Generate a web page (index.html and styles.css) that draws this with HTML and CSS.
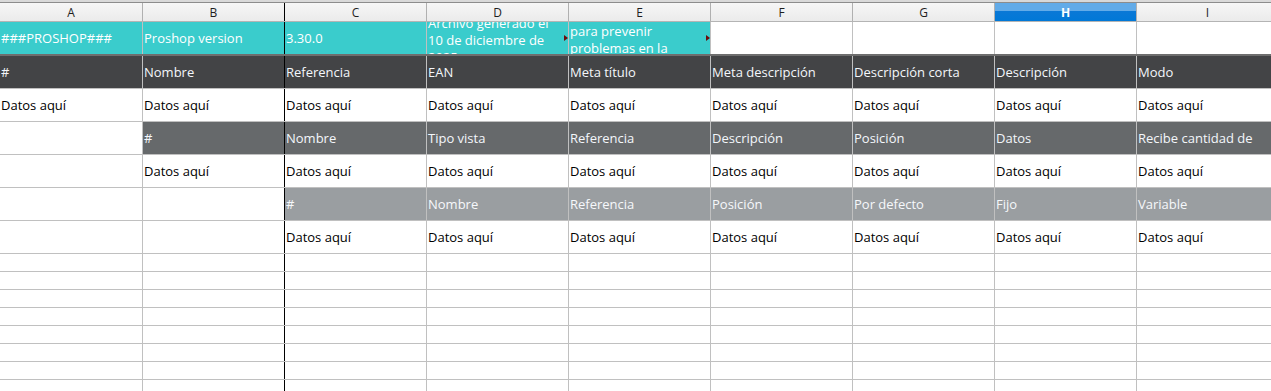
FILE: index.html
```html
<!DOCTYPE html>
<html lang="es">
<head>
  <meta charset="UTF-8" />
  <meta name="viewport" content="width=device-width, initial-scale=1.0"/>
  <title>Plantilla de importación</title>
  <link rel="stylesheet" href="styles.css">
</head>
<body>

  <div class="sheet">
    <div class="top-strip"></div>

    <div class="row col-heads">
      <div class="cell">A</div>
      <div class="cell">B</div>
      <div class="cell">C</div>
      <div class="cell">D</div>
      <div class="cell">E</div>
      <div class="cell">F</div>
      <div class="cell">G</div>
      <div class="cell active">H</div>
      <div class="cell">I</div>
    </div>

    <div class="row info">
      <div class="cell cyan">###PROSHOP###</div>
      <div class="cell cyan">Proshop version</div>
      <div class="cell cyan">3.30.0</div>
      <div class="cell cyan clipped">
        <div class="wrap">Archivo generado el<br>10 de diciembre de<br>2025</div>
        <span class="more"></span>
      </div>
      <div class="cell cyan clipped">
        <div class="wrap">No modifique esta fila<br>para prevenir<br>problemas en la<br>importación</div>
        <span class="more"></span>
      </div>
      <div class="cell"></div>
      <div class="cell"></div>
      <div class="cell"></div>
      <div class="cell"></div>
    </div>

    <div class="row">
      <div class="cell dark">#</div>
      <div class="cell dark">Nombre</div>
      <div class="cell dark">Referencia</div>
      <div class="cell dark">EAN</div>
      <div class="cell dark">Meta título</div>
      <div class="cell dark">Meta descripción</div>
      <div class="cell dark">Descripción corta</div>
      <div class="cell dark">Descripción</div>
      <div class="cell dark">Modo</div>
    </div>

    <div class="row">
      <div class="cell">Datos aquí</div>
      <div class="cell">Datos aquí</div>
      <div class="cell">Datos aquí</div>
      <div class="cell">Datos aquí</div>
      <div class="cell">Datos aquí</div>
      <div class="cell">Datos aquí</div>
      <div class="cell">Datos aquí</div>
      <div class="cell">Datos aquí</div>
      <div class="cell">Datos aquí</div>
    </div>

    <div class="row">
      <div class="cell"></div>
      <div class="cell mid">#</div>
      <div class="cell mid">Nombre</div>
      <div class="cell mid">Tipo vista</div>
      <div class="cell mid">Referencia</div>
      <div class="cell mid">Descripción</div>
      <div class="cell mid">Posición</div>
      <div class="cell mid">Datos</div>
      <div class="cell mid">Recibe cantidad de</div>
    </div>

    <div class="row">
      <div class="cell"></div>
      <div class="cell">Datos aquí</div>
      <div class="cell">Datos aquí</div>
      <div class="cell">Datos aquí</div>
      <div class="cell">Datos aquí</div>
      <div class="cell">Datos aquí</div>
      <div class="cell">Datos aquí</div>
      <div class="cell">Datos aquí</div>
      <div class="cell">Datos aquí</div>
    </div>

    <div class="row">
      <div class="cell"></div>
      <div class="cell"></div>
      <div class="cell light">#</div>
      <div class="cell light">Nombre</div>
      <div class="cell light">Referencia</div>
      <div class="cell light">Posición</div>
      <div class="cell light">Por defecto</div>
      <div class="cell light">Fijo</div>
      <div class="cell light">Variable</div>
    </div>

    <div class="row">
      <div class="cell"></div>
      <div class="cell"></div>
      <div class="cell">Datos aquí</div>
      <div class="cell">Datos aquí</div>
      <div class="cell">Datos aquí</div>
      <div class="cell">Datos aquí</div>
      <div class="cell">Datos aquí</div>
      <div class="cell">Datos aquí</div>
      <div class="cell">Datos aquí</div>
    </div>

    <div class="row small"><div class="cell"></div><div class="cell"></div><div class="cell"></div><div class="cell"></div><div class="cell"></div><div class="cell"></div><div class="cell"></div><div class="cell"></div><div class="cell"></div></div>
    <div class="row small"><div class="cell"></div><div class="cell"></div><div class="cell"></div><div class="cell"></div><div class="cell"></div><div class="cell"></div><div class="cell"></div><div class="cell"></div><div class="cell"></div></div>
    <div class="row small"><div class="cell"></div><div class="cell"></div><div class="cell"></div><div class="cell"></div><div class="cell"></div><div class="cell"></div><div class="cell"></div><div class="cell"></div><div class="cell"></div></div>
    <div class="row small"><div class="cell"></div><div class="cell"></div><div class="cell"></div><div class="cell"></div><div class="cell"></div><div class="cell"></div><div class="cell"></div><div class="cell"></div><div class="cell"></div></div>
    <div class="row small"><div class="cell"></div><div class="cell"></div><div class="cell"></div><div class="cell"></div><div class="cell"></div><div class="cell"></div><div class="cell"></div><div class="cell"></div><div class="cell"></div></div>
    <div class="row small"><div class="cell"></div><div class="cell"></div><div class="cell"></div><div class="cell"></div><div class="cell"></div><div class="cell"></div><div class="cell"></div><div class="cell"></div><div class="cell"></div></div>
    <div class="row small"><div class="cell"></div><div class="cell"></div><div class="cell"></div><div class="cell"></div><div class="cell"></div><div class="cell"></div><div class="cell"></div><div class="cell"></div><div class="cell"></div></div>
    <div class="row small"><div class="cell"></div><div class="cell"></div><div class="cell"></div><div class="cell"></div><div class="cell"></div><div class="cell"></div><div class="cell"></div><div class="cell"></div><div class="cell"></div></div>
  </div>

</body>
</html>
```

FILE: styles.css
```css
* { box-sizing: border-box; }

html, body {
  margin: 0;
  padding: 0;
  background: #fff;
  overflow: hidden;
  height: 100vh;
}

.sheet {
  width: 1271px;
  font-family: 'Open Sans', 'Noto Sans', sans-serif;
  font-size: 13px;
  color: #000;
  overflow: hidden;
}

.top-strip {
  height: 2px;
  background: #d9d9d9;
}

.row {
  display: grid;
  grid-template-columns: repeat(9, 142px);
  height: 33px;
  border-bottom: 1px solid #c0c0c0;
}

.cell {
  position: relative;
  display: flex;
  align-items: center;
  padding-left: 1px;
  white-space: nowrap;
  overflow: hidden;
  border-left: 1px solid #c0c0c0;
}

.cell:first-child { border-left: none; }
.cell:nth-child(3) { border-left-color: #000; }

/* column letters */
.col-heads {
  height: 20px;
  border-top: 1px solid #8c8c8c;
  border-bottom: 1px solid #b4b4b4;
  background: linear-gradient(#f6f6f6, #ebebeb);
}

.col-heads .cell {
  justify-content: center;
  padding: 0;
  font-size: 12px;
  color: #1e1e1e;
  border-left-color: #b0b0b0;
}

.col-heads .cell:nth-child(3) { border-left-color: #000; }

.col-heads .active {
  background: linear-gradient(#62abe8 0, #62abe8 45%, #0a78d6 45%, #0078d7 100%);
  color: #fff;
  font-weight: bold;
}

/* first row with file info */
.info {
  height: 34px;
  border-bottom: 2px solid #6e6e6e;
}

.cyan {
  background: #3acccc;
  color: #fff;
}

.clipped { white-space: normal; }

.clipped .wrap {
  line-height: 17px;
  margin-top: 4px;
  flex-shrink: 0;
}

.more {
  position: absolute;
  right: 0;
  top: 13px;
  width: 0;
  height: 0;
  border-top: 3px solid transparent;
  border-bottom: 3px solid transparent;
  border-left: 4px solid #6a0b0b;
}

.dark {
  background: #434446;
  color: #f4f7fb;
}

.mid {
  background: #66696b;
  color: #f4f7fb;
}

.light {
  background: #9a9ea1;
  color: #f6f8fb;
}

.row.small { height: 18px; }
```
